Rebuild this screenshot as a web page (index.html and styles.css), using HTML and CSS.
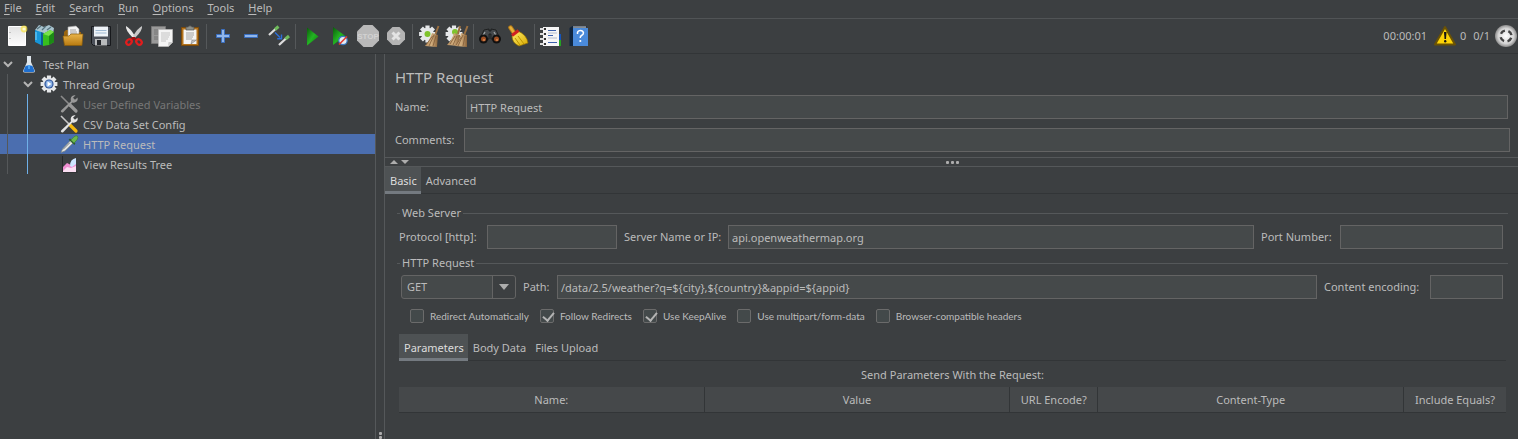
FILE: index.html
```html
<!DOCTYPE html>
<html lang="en">
<head>
<meta charset="utf-8">
<title>Test Plan</title>
<link rel="stylesheet" href="styles.css">
</head>
<body>
<svg class="defs" aria-hidden="true">
  <defs>
    <linearGradient id="paper" x1="0" y1="0" x2="0" y2="1"><stop offset="0" stop-color="#e2e2e2"/><stop offset="1" stop-color="#fdfdfd"/></linearGradient>
    <linearGradient id="green" x1="0" y1="0" x2="1" y2="1"><stop offset="0" stop-color="#0a5c0a"/><stop offset=".5" stop-color="#23b423"/><stop offset="1" stop-color="#0b7c0b"/></linearGradient>
    <linearGradient id="folder" x1="0" y1="0" x2="0" y2="1"><stop offset="0" stop-color="#e9b44b"/><stop offset="1" stop-color="#b87a10"/></linearGradient>
    <linearGradient id="straw" x1="0" y1="0" x2="1" y2="0"><stop offset="0" stop-color="#b88f60"/><stop offset=".5" stop-color="#d2ae7e"/><stop offset="1" stop-color="#8a6238"/></linearGradient>
    <linearGradient id="yellow" x1="0" y1="0" x2="1" y2="1"><stop offset="0" stop-color="#fff06a"/><stop offset="1" stop-color="#d9a800"/></linearGradient>
    <radialGradient id="ball"><stop offset="0" stop-color="#ffffff"/><stop offset=".7" stop-color="#d4d4d4"/><stop offset="1" stop-color="#8c8c8c"/></radialGradient>
    <g id="gear"><path d="M0-6V6M-6 0H6M-4.300-4.300L4.300 4.300M4.300-4.300L-4.300 4.300" stroke="#e6e8ea" stroke-width="3" transform="scale(1.400)"/><circle r="6.300" fill="#e6e8ea"/></g>
    <g id="dropper"><path d="M1 17.5l1.5-3.5 8-8.500 2.600 2.400-8.200 8z" fill="#e8e8e8" stroke="#7d8580" stroke-width=".7"/><path d="M3 14.500l7-7" stroke="#5b6368" stroke-width=".8"/><path d="M8.600 4.800l5.800 5.200 1-1.700-5.400-4.800z" fill="#2e5b2c"/><path d="M10.800 5.100l3.200-3.300q2.400-1.800 3.500-.6 1.100 1.400-.5 3.600l-3 3.300z" fill="#6cb84f" stroke="#3c8430" stroke-width=".7"/></g>
    <g id="wrench"><path d="M11 6.200q-1-3.400 1.200-5.200 1.400-1 3.400-.7l-2.600 2.500 2 2 2.600-2.400q.6 2.600-1 4.200-1.900 1.700-4.300.9L3.200 17.200q-1.200.8-2-.1-.7-.8.1-1.800z"/></g>
  </defs>
</svg>

<nav class="menubar">
  <button><u>F</u>ile</button><button><u>E</u>dit</button><button><u>S</u>earch</button><button><u>R</u>un</button><button><u>O</u>ptions</button><button><u>T</u>ools</button><button><u>H</u>elp</button>
</nav>

<header class="toolbar">
  <div class="tools">
    <button aria-label="New"><svg viewBox="0 0 24 24"><path d="M3.500 2.500h17v19h-17z" fill="url(#paper)" stroke="#fff"/><path d="M5 8v1M5 14v1" stroke="#999"/><circle cx="19" cy="5" r="3.400" fill="#f5e14a" opacity=".75"/><circle cx="19" cy="5" r="1.600" fill="#fffbd0"/></svg></button>
    <button aria-label="Templates"><svg viewBox="0 0 24 24"><path d="M2 6l4-5 5 2 5-2 5 3-1 6-6 4z" fill="#a9c4cf"/><path d="M4 5l4-3M9 6l4-4M14 6l4-3" stroke="#55747f" stroke-width="1.200"/><path d="M2 6l6 2v13l-6-3z" fill="#1695d8"/><path d="M3 8v8" stroke="#84d5fa"/><path d="M8 8l3 1v13l-3-1z" fill="#0c5e94"/><path d="M10 10l7-4 4 2v10l-5 3-6 1z" fill="#38bf1f"/><path d="M10 10l7-4 4 2-5 4z" fill="#78e24a"/><path d="M16 12l5-4v10l-5 3z" fill="#1c8a16"/></svg></button>
    <button aria-label="Open"><svg viewBox="0 0 24 24"><path d="M3 8l2-2h4l1 2h10v8H3z" fill="#9a650f"/><path d="M7 3l8-1 3 3v9H7z" fill="#f4f4f4" stroke="#aaa" stroke-width=".6"/><path d="M9 6h6M9 8h7M9 10h7" stroke="#8d8d8d" stroke-width=".8"/><path d="M2 12h6l2-2h12l-1 11.500H3.500z" fill="url(#folder)" stroke="#8a5b0a" stroke-width=".7"/></svg></button>
    <button aria-label="Save"><svg viewBox="0 0 24 24"><path d="M2.500 2.500h19v19h-17l-2-2z" fill="#4b5059" stroke="#17191c"/><path d="M5 2.500h14v10H5z" fill="#eef3f8"/><path d="M6.500 6.500h11M6.500 9h11" stroke="#9db8d2"/><path d="M6 15h12v6.500H6z" fill="#b9bbbd"/><path d="M8 16h4v5H8z" fill="#23262b"/></svg></button>
    <i></i>
    <button aria-label="Cut"><svg viewBox="0 0 24 24"><path d="M4 2q-1 4 7 12l2-2Q8 4 4 2z" fill="#e9e9e9"/><path d="M20 2q1 4-7 12l-2-2Q16 4 20 2z" fill="#c9c9c9"/><path d="M10 13l3 0 2 3-1 1-2-2-3 3-1-1z" fill="#a30f0f"/><ellipse cx="7" cy="18" rx="3" ry="2.400" transform="rotate(-45 7 18)" fill="none" stroke="#e11d1d" stroke-width="2.200"/><ellipse cx="17" cy="18" rx="3" ry="2.400" transform="rotate(45 17 18)" fill="none" stroke="#e11d1d" stroke-width="2.200"/></svg></button>
    <button aria-label="Copy"><svg viewBox="0 0 24 24"><path d="M1.500 2.500h14v17h-14z" fill="#999" stroke="#777"/><path d="M4 6h9M4 8h9M4 10h5M4 13h4M4 15h4" stroke="#747474"/><path d="M8.500 5.500h14v13l-4 4h-10z" fill="#f4f4f4" stroke="#bbb" stroke-width=".7"/><path d="M11 9h9M11 11h9M11 13h8M11 15h7M11 17h5" stroke="#b9b9b9" stroke-width=".8"/><path d="M18 22l.5-4 4 .3z" fill="#c9c9c9"/></svg></button>
    <button aria-label="Paste"><svg viewBox="0 0 24 24"><path d="M3.500 3.500h17v18h-17z" fill="#b4731c" stroke="#7b4a0b"/><path d="M5.500 5.500h13v14.500h-13z" fill="#f4f4f4"/><path d="M8 5V3h2q2-2.500 4 0h2v3H8z" fill="#8c8f89" stroke="#555" stroke-width=".7"/><path d="M8 9h8M8 11h8M8 13h7M8 15h6" stroke="#999" stroke-width=".9"/><path d="M13 20l1-4h4.500z" fill="#c4c4c4" stroke="#555" stroke-width=".4"/></svg></button>
    <i></i>
    <button aria-label="Expand all"><svg viewBox="0 0 24 24"><path d="M10.500 5.500h3v5h5v3h-5v5h-3v-5h-5v-3h5z" fill="#91b6ea" stroke="#3a6fc0"/></svg></button>
    <button aria-label="Collapse all"><svg viewBox="0 0 24 24"><path d="M5.500 10.500h13v3h-13z" fill="#91b6ea" stroke="#3a6fc0"/></svg></button>
    <button aria-label="Toggle"><svg viewBox="0 0 24 24"><path d="M2 11l6.500-6" stroke="#dcdcdc" stroke-width="2.300"/><path d="M8 5.500l3.500-3" stroke="#6fbb5c" stroke-width="3"/><path d="M12 21l7-6.500" stroke="#dcdcdc" stroke-width="2.300"/><path d="M18.500 15l3.500-3" stroke="#6fbb5c" stroke-width="3"/><path d="M8 8.500l5 5M14.500 10.500v4.300h-4.300" fill="none" stroke="#2d6fda" stroke-width="1.400"/></svg></button>
    <i></i>
    <button aria-label="Start"><svg viewBox="0 0 24 24"><path d="M7 3.500l11.500 9L7 21.500z" fill="url(#green)"/></svg></button>
    <button aria-label="Start no pauses"><svg viewBox="0 0 24 24"><path d="M5 3l12.500 9L5 21z" fill="url(#green)"/><circle cx="15" cy="16.500" r="4.200" fill="#e3ecf5" stroke="#3c79c2" stroke-width="1.200"/><path d="M11 20.500l8-8" stroke="#e23a2e" stroke-width="1.600"/></svg></button>
    <button aria-label="Stop" disabled><svg viewBox="0 0 24 24"><path d="M7.500 1h9L23 7.500v9L16.500 23h-9L1 16.500v-9z" fill="#b9b9b9"/><text x="12" y="15" text-anchor="middle" class="stop">STOP</text></svg></button>
    <button aria-label="Shutdown" disabled><svg viewBox="0 0 24 24"><path d="M8.500 3h7L21 8.500v7L15.500 21h-7L3 15.500v-7z" fill="#b4b4b4"/><path d="M8.500 8.500l7 7M15.500 8.500l-7 7" stroke="#e4e4e4" stroke-width="3"/></svg></button>
    <i></i>
    <button aria-label="Clear"><svg viewBox="0 0 24 24"><use href="#gear" transform="translate(10.500 10)"/><circle cx="10.500" cy="10" r="3" fill="#7fc32d"/><path d="M21.500 2l-3 8" stroke="#9b7040" stroke-width="2"/><path d="M15 9l6 2-1 12-12-1q5-6 7-13z" fill="url(#straw)"/><path d="M17 11l-5 11M19 12l-3 10M15.500 12L9 21" stroke="#805c38" stroke-width=".8"/></svg></button>
    <button aria-label="Clear all"><svg viewBox="0 0 24 24"><use href="#gear" transform="translate(9 10)"/><circle cx="10" cy="8" r="3" fill="#7fc32d"/><path d="M15 2l-2 8M22.500 2l-3 8" stroke="#9b7040" stroke-width="2"/><path d="M9 9l6 2-1 11-12-1q5-5 7-12z" fill="url(#straw)"/><path d="M16 9l6 2 0 12-12-1q5-6 6-13z" fill="url(#straw)"/><path d="M10 12L5 20M12 12L8 21M18 11l-5 11M20 12l-2 10M16.500 13L11 21" stroke="#805c38" stroke-width=".8"/></svg></button>
    <i></i>
    <button aria-label="Search"><svg viewBox="0 0 24 24"><path d="M6 6l5-1v2h2V5l5 1 4 9H13v-5h-2v5H2z" fill="#44484b" stroke="#151617" stroke-width=".8"/><path d="M7 8l-3 5M16 8l3 5" stroke="#a2a6a8" stroke-width="1.300"/><circle cx="5.500" cy="15" r="4.500" fill="#111"/><circle cx="18.500" cy="15" r="4.500" fill="#111"/><circle cx="5.500" cy="15" r="2.500" fill="#9d4e23"/><circle cx="18.500" cy="15" r="2.500" fill="#9d4e23"/><circle cx="6" cy="16" r="1" fill="#dd8a4f"/><circle cx="19" cy="16" r="1" fill="#dd8a4f"/></svg></button>
    <button aria-label="Reset search"><svg viewBox="0 0 24 24"><path d="M4.500 3.500l4 6" stroke="#b57c18" stroke-width="4.500" stroke-linecap="round"/><path d="M4.500 3.500l4 6" stroke="#e6b03b" stroke-width="2.500" stroke-linecap="round"/><path d="M6 12l6-5q9 4 10 12l-9 3Q6 19 6 12z" fill="url(#yellow)" stroke="#927000" stroke-width=".7"/><path d="M9 14l5 7M12 12l6 8" stroke="#ba9300"/><path d="M6 11.500l6.500-5" stroke="#d12121" stroke-width="3"/></svg></button>
    <i></i>
    <button aria-label="Function helper"><svg viewBox="0 0 24 24"><path d="M4 3h16v19H4z" fill="#f6f6f6"/><path d="M20 10h2v6h-2z" fill="#1554b8"/><path d="M20 16h2v6h-2z" fill="#23a223"/><path d="M1 5h6M1 10h6M1 15h6M1 20h6" stroke="#ddd" stroke-width="2"/><path d="M5 5h2M5 10h2M5 15h2M5 20h2" stroke="#333" stroke-width="2"/><path d="M9 6.500h8M9 11.500h5M9 18.500h9" stroke="#3c61ac"/><path d="M9 9h9M9 14h9" stroke="#a5b0c6" stroke-width=".8"/></svg></button>
    <button aria-label="Help"><svg viewBox="0 0 24 24"><path d="M2.500 4l3-2h14v1l-13 .5V22h-4z" fill="#10253e"/><path d="M6 4h15v18H6z" fill="#4a8ada"/><path d="M6 3h13" stroke="#ddd"/><path d="M10.500 10V8.500q.5-2 3-2t3 2.300q0 1.700-2 2.700-1.300.8-1.300 2.500" fill="none" stroke="#fff" stroke-width="1.500"/><circle cx="13.300" cy="17" r="1.100" fill="#fff"/></svg></button>
  </div>
  <div class="status">
    <span class="clock">00:00:01</span>
    <svg class="warn" viewBox="0 0 24 24"><path d="M12 3L22 20.500H2z" fill="#fdd307" stroke="#6a5205" stroke-width="2" stroke-linejoin="round"/><path d="M11 8h2.500l-.5 7h-1.500z" fill="#151515"/><circle cx="12.200" cy="17.300" r="1.200" fill="#151515"/></svg>
    <span class="errors">0</span><span class="threads">0/1</span>
    <svg class="orb" viewBox="0 0 24 24"><circle cx="12" cy="12" r="11" fill="url(#ball)"/><circle cx="12" cy="12" r="5.500" fill="none" stroke="#444" stroke-width="2.400" stroke-dasharray="5 3.640" stroke-dashoffset="-1.820"/></svg>
  </div>
</header>

<main class="workspace">
  <aside class="tree-pane">
    <ul class="tree">
      <li class="l0"><svg class="chev" viewBox="0 0 10 10"><path d="M1 3l4 4 4-4"/></svg><svg class="ico" viewBox="0 0 18 18"><path d="M7 1h4v6l4 9q0 1.500-2 1.500H5q-2 0-2-1.500l4-9z" fill="#dfe6ec"/><path d="M5.500 11q3.500-1.500 7 0l2 5q0 1-1.500 1H5q-1.500 0-1.500-1z" fill="#1e6fd0"/><path d="M8 10h2v4H8z" fill="#4ba3f2"/></svg><span>Test Plan</span></li>
      <li class="l1"><svg class="chev" viewBox="0 0 10 10"><path d="M1 3l4 4 4-4"/></svg><svg class="ico" viewBox="0 0 18 18"><use href="#gear" transform="translate(9 9)"/><circle cx="9" cy="9" r="4.600" fill="#2f559a"/><circle cx="9" cy="9" r="3.400" fill="#86aee4"/><path d="M7.500 6.500l4 2.500-4 2.500z" fill="#fff"/></svg><span>Thread Group</span></li>
      <li class="l2 off"><svg class="ico" viewBox="0 0 18 18"><path d="M1 1l9 9" stroke="#8b8b8b" stroke-width="1.600"/><path d="M10 10l6 6" stroke="#999" stroke-width="3.200" stroke-linecap="round"/><use href="#wrench" fill="#999"/></svg><span>User Defined Variables</span></li>
      <li class="l2"><svg class="ico" viewBox="0 0 18 18"><path d="M1 1l9 9" stroke="#c8c8c8" stroke-width="1.600"/><path d="M10 10l6 6" stroke="#f4b80d" stroke-width="3.200" stroke-linecap="round"/><use href="#wrench" fill="#e4e4e4"/></svg><span>CSV Data Set Config</span></li>
      <li class="l2 selected"><svg class="ico" viewBox="0 0 18 18"><use href="#dropper"/></svg><span>HTTP Request</span></li>
      <li class="l2"><svg class="ico" viewBox="0 0 18 18"><path d="M2.500 1v16h15" stroke="#26282a" fill="none"/><path d="M3 12l4-4 4 2 5-3v10H3z" fill="#f08fd2"/><path d="M3 16l4-4 4 1 5-2v6H3z" fill="#fbdff3"/><path d="M10 11q0-7 6-8v6l-4 3z" fill="#cde5ff"/></svg><span>View Results Tree</span></li>
    </ul>
  </aside>
  <div class="splitter"><span></span><span></span></div>

  <section class="editor">
    <div class="head">
      <h1>HTTP Request</h1>
      <div class="row name"><label for="name">Name:</label><input id="name" value="HTTP Request"></div>
      <div class="row comments"><label for="comments">Comments:</label><input id="comments"></div>
    </div>
    <div class="hsplit"><svg class="arrows" viewBox="0 0 20 8"><path d="M1 6l4-4 4 4zM12 2h8l-4 4z"/></svg><div class="dots"><span></span><span></span><span></span></div></div>
    <div class="tabs main-tabs"><button class="active">Basic</button><button>Advanced</button></div>

    <div class="body">
      <fieldset>
        <legend>Web Server</legend>
        <div class="row server">
          <label class="protocol" for="protocol">Protocol [http]:</label><input id="protocol">
          <label class="host" for="host">Server Name or IP:</label><input id="host" value="api.openweathermap.org">
          <label class="port" for="port">Port Number:</label><input id="port">
        </div>
      </fieldset>
      <fieldset>
        <legend>HTTP Request</legend>
        <div class="row request">
          <div class="combo"><select aria-label="Method"><option>GET</option></select><svg viewBox="0 0 10 6"><path d="M0 0h10L5 6z"/></svg></div>
          <label class="path" for="path">Path:</label><input id="path" value="/data/2.5/weather?q=${city},${country}&amp;appid=${appid}">
          <label class="encoding" for="encoding">Content encoding:</label><input id="encoding">
        </div>
        <div class="checks">
          <label><input type="checkbox">Redirect Automatically</label>
          <label><input type="checkbox" checked>Follow Redirects</label>
          <label><input type="checkbox" checked>Use KeepAlive</label>
          <label><input type="checkbox">Use multipart/form-data</label>
          <label><input type="checkbox">Browser-compatible headers</label>
        </div>
      </fieldset>
      <div class="params">
        <div class="tabs sub-tabs"><button class="active">Parameters</button><button>Body Data</button><button>Files Upload</button></div>
        <table>
          <caption>Send Parameters With the Request:</caption>
          <colgroup><col><col><col class="c-url"><col><col class="c-inc"></colgroup>
          <thead><tr><th>Name:</th><th>Value</th><th>URL Encode?</th><th>Content-Type</th><th>Include Equals?</th></tr></thead>
        </table>
      </div>
    </div>
  </section>
</main>
</body>
</html>
```
FILE: styles.css
```css
* { box-sizing: border-box; }
body {
  margin: 0;
  min-height: 100vh;
  display: flex;
  flex-direction: column;
  background: #3c3f41;
  color: #bbbbbb;
  font: 11px/16px "Noto Sans", "Open Sans", sans-serif;
}
button, input, select { font: inherit; color: inherit; margin: 0; }
button { border: 0; background: none; padding: 0; white-space: nowrap; }
.defs { position: absolute; width: 0; height: 0; }

.menubar { display: flex; gap: 14px; height: 19px; padding: 0 4px; border-bottom: 1px solid #515456; align-items: flex-start; }
.menubar u { text-underline-offset: 2px; }

.toolbar { display: flex; justify-content: space-between; height: 35px; padding: 0 0 0 3px; border-bottom: 1px solid #323537; }
.tools { display: flex; align-items: center; }
.tools button { display: flex; justify-content: center; width: 28px; }
.tools svg, .status .orb { width: 24px; height: 24px; }
.tools i { width: 1px; height: 25px; margin: 0 2px; background: #55585a; }
.stop { font: 700 8px "Liberation Sans", sans-serif; fill: #d2d2d2; }
.status { display: flex; align-items: center; }
.warn { width: 24px; height: 24px; margin-left: 6px; }
.errors { margin-left: 3px; }
.threads { margin: 0 4px 0 7px; }

.workspace { display: flex; flex: 1; }
.tree-pane { flex: 0 0 376px; border-right: 1px solid #55585a; }
.tree { list-style: none; margin: 0; padding: 0; line-height: 18px; }
.tree li { display: flex; align-items: center; height: 20px; padding-left: 3px; white-space: nowrap; background: linear-gradient(#55585a, #55585a) 7px 0 / 1px 100% no-repeat; }
.tree .l0 { background: none; }
.tree .l1 { padding-left: 23px; }
.tree .l2 { padding-left: 60px; background: linear-gradient(#6fb0e8, #6fb0e8) 27px 0 / 1px 100% no-repeat, linear-gradient(#55585a, #55585a) 7px 0 / 1px 100% no-repeat; }
.tree .off { color: #777777; }
.tree .selected { background-color: #4b6eaf; }
.tree span { padding-top: 1px; }
.chev { width: 10px; height: 10px; margin-right: 7px; fill: none; stroke: #b4b4b4; stroke-width: 2; }
.ico { width: 18px; height: 18px; margin-right: 5px; overflow: visible; }

.splitter { flex: 0 0 8px; display: flex; flex-direction: column; align-items: center; justify-content: flex-end; gap: 1px; }
.splitter span, .dots span { width: 3px; height: 3px; border-radius: 1px; background: #adadad; }

.editor { flex: 1; min-width: 0; display: flex; flex-direction: column; border-left: 1px solid #55585a; }
.head { padding: 12px 8px 5px 10px; }
h1 { margin: 0 0 7px; font-size: 15px; line-height: 22px; font-weight: 400; }
.row { display: flex; align-items: center; }
.row label { flex: none; white-space: nowrap; }
.row > input { height: 24px; min-width: 0; padding: 0 3px; background: #45494a; border: 1px solid #646464; outline: 0; border-radius: 0; }
.name { margin-bottom: 9px; padding-right: 2px; }
.name label { width: 71px; }
.comments label { width: 69px; }
.name input, .comments input { flex: 1; }

.hsplit { display: flex; align-items: center; height: 10px; border: solid #55585a; border-width: 1px 0; }
.arrows { width: 20px; height: 8px; margin-left: 4px; fill: #adadad; }
.dots { flex: 1; display: flex; justify-content: center; gap: 2px; margin-right: 22px; }

.tabs { display: flex; border-bottom: 1px solid #323537; height: 27px; }
.tabs button { height: 27px; padding: 0 4px 0 5px; border-bottom: 3px solid transparent; padding-top: 3px; }
.tabs .active { background: #4e5254; color: #dddddd; border-bottom-color: #747a80; }

.body { padding: 11px 10px 0 12px; }
fieldset { min-width: 0; margin: 0; padding: 0; border: 0; }
legend { display: flex; align-items: center; width: 100%; gap: 2px; padding: 0; height: 16px; white-space: nowrap; }
legend::before, legend::after { content: ""; height: 1px; width: 3px; background: #55585a; }
legend::after { flex: 1; }
fieldset .row { padding: 4px 5px 0 2px; margin-bottom: 6px; }
.protocol { width: 88px; }
#protocol { width: 130px; }
.host { width: 104px; margin-left: 7px; }
#host { flex: 1; }
.port { width: 79px; margin-left: 7px; }
#port { width: 163px; }
.combo { position: relative; width: 115px; height: 24px; margin-left: 2px; }
select { appearance: none; width: 100%; height: 24px; padding: 0 5px; border: 1px solid #646464; border-radius: 3px; background: linear-gradient(#646464, #646464) 90px 0 / 1px 100% no-repeat, linear-gradient(90deg, #45494a 90px, #3c3f41 90px); }
.combo svg { position: absolute; right: 7px; top: 9px; width: 10px; height: 6px; fill: #adadad; pointer-events: none; }
.path { width: 34px; margin-left: 7px; }
#path { flex: 1; }
.encoding { width: 106px; margin-left: 7px; }
#encoding { width: 73px; }
.checks { display: flex; gap: 11px; padding: 2px 0 0 13px; font-family: Lato, "Noto Sans", sans-serif; font-size: 10px; line-height: 18px; }
.checks label { display: flex; align-items: center; gap: 6px; white-space: nowrap; }
.checks input { appearance: none; position: relative; width: 14px; height: 14px; border: 1px solid #6b6b6b; border-radius: 2px; background: #43494a; }
.checks input:checked::after { content: ""; position: absolute; left: 4px; top: 0; width: 5px; height: 9px; border: solid #b4b4b4; border-width: 0 2px 2px 0; rotate: 40deg; }

.params { margin: 9px 2px 0 2px; }
table { width: 100%; table-layout: fixed; border-collapse: separate; border-spacing: 0; }
caption { height: 26px; line-height: 27px; }
.c-url { width: 88px; }
.c-inc { width: 102px; }
th { height: 26px; padding: 0; font-weight: 400; background: #45484a; border-right: 1px solid #323537; border-bottom: 1px solid #323537; white-space: nowrap; }
th:last-child { border-right: 0; }
```
